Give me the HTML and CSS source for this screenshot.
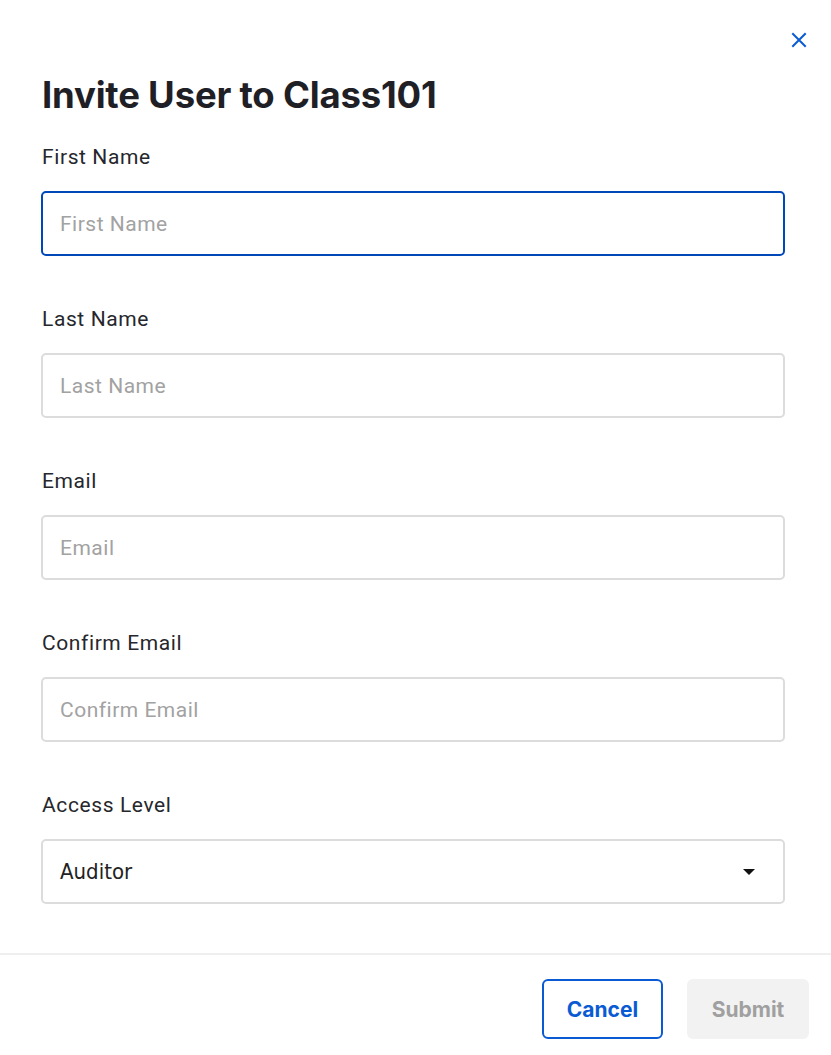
FILE: index.html
```html
<!DOCTYPE html>
<html>
<head>
<meta charset="utf-8">
<link rel="stylesheet" href="styles.css">
</head>
<body>
<div class="modal">
  <div class="top">
    <button class="close" aria-label="Close">
      <svg width="16" height="16" viewBox="0 0 16 16"><path d="M2 2L14 14M14 2L2 14" stroke="#0a5bd3" stroke-width="2" stroke-linecap="square"/></svg>
    </button>
  </div>
  <div class="body">
    <h1 class="title">Invite User to Class101</h1>
    <div class="field">
      <label class="label">First Name</label>
      <div class="input focused"><span class="ph">First Name</span></div>
    </div>
    <div class="field">
      <label class="label">Last Name</label>
      <div class="input"><span class="ph">Last Name</span></div>
    </div>
    <div class="field">
      <label class="label">Email</label>
      <div class="input"><span class="ph">Email</span></div>
    </div>
    <div class="field">
      <label class="label">Confirm Email</label>
      <div class="input"><span class="ph">Confirm Email</span></div>
    </div>
    <div class="field">
      <label class="label">Access Level</label>
      <div class="input select"><span class="val">Auditor</span><span class="caret"></span></div>
    </div>
  </div>
  <div class="footer">
    <button class="btn cancel">Cancel</button>
    <button class="btn submit">Submit</button>
  </div>
</div>
</body>
</html>
```
FILE: styles.css
```css
* { box-sizing: border-box; }
html, body { margin: 0; padding: 0; background: #fff; }
body { font-family: Roboto, "Liberation Sans", sans-serif; color: #1f2026; }
.modal { width: 831px; height: 1055px; display: flex; flex-direction: column; }
.top { display: flex; justify-content: flex-end; padding: 32px 24px 0 0; height: 60px; }
.close { background: none; border: 0; padding: 0; width: 16px; height: 16px; cursor: pointer; }
.body { padding: 0 46px 0 41px; flex: 1; }
.title { font-family: Inter, "Liberation Sans", sans-serif; font-weight: 700; font-size: 36.5px; letter-spacing: -0.2px; margin: 13px 0 0 1px; line-height: 44px; color: #1f2026; }
.field { display: flex; flex-direction: column; }
.field + .field { margin-top: 49px; }
.title + .field { margin-top: 26px; }
.label { font-size: 21px; letter-spacing: 0.6px; line-height: 28px; margin: 0 0 20px 1px; color: #26272c; }
.input { height: 65px; border: 2px solid #dcdcdc; border-radius: 5px; display: flex; align-items: center; padding: 0 17px; font-size: 21px; letter-spacing: 0.5px; }
.input.focused { border-color: #0047b8; }
.ph { color: #a2a2a2; }
.select { justify-content: space-between; padding-right: 28px; }
.val { font-family: "DejaVu Sans Condensed", "Liberation Sans Narrow", sans-serif; color: #222; font-size: 22px; letter-spacing: 0; }
.caret { width: 0; height: 0; border-left: 6px solid transparent; border-right: 6px solid transparent; border-top: 6px solid #111; }
.footer { border-top: 2px solid #efefef; height: 102px; display: flex; justify-content: flex-end; align-items: flex-start; gap: 24px; padding: 24px 22px 0 0; }
.btn { height: 60px; width: 122px; border-radius: 6px; font-family: Inter, "Liberation Sans", sans-serif; font-weight: 700; font-size: 21px; cursor: pointer; }
.cancel { background: #fff; border: 2px solid #0a5bd3; color: #0a5bd3; width: 121px; }
.submit { background: #f2f2f2; border: 0; color: #a0a0a0; }
```
